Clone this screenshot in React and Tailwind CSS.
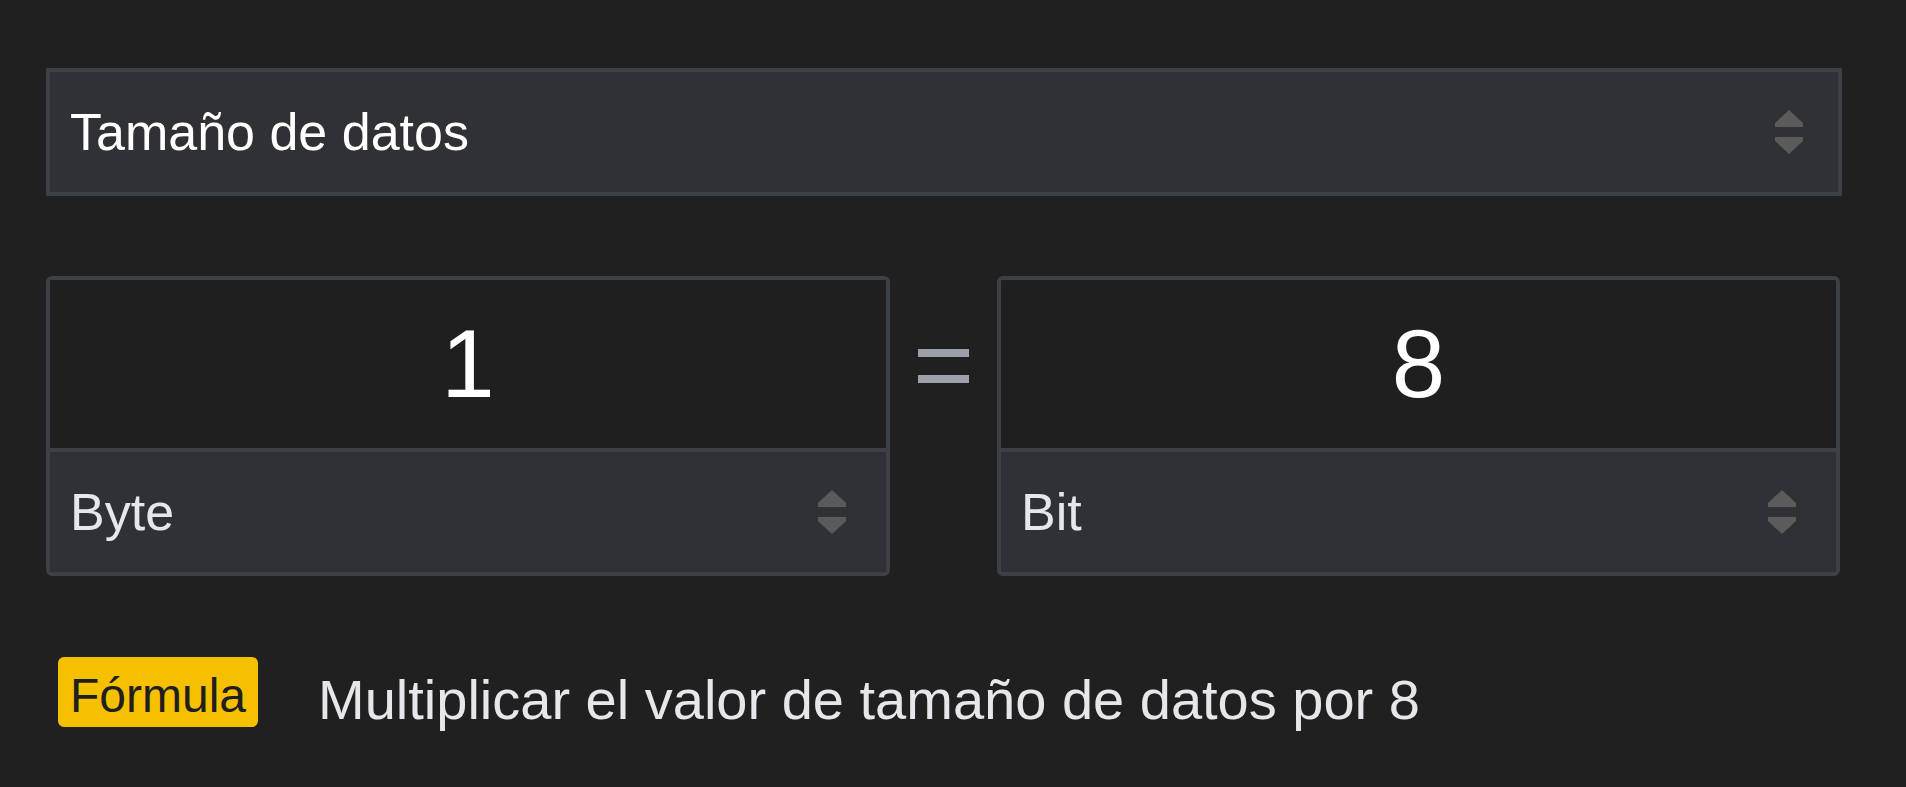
import React from "react";

function Arrows() {
  return (
    <svg width="28" height="44" viewBox="0 0 28 44" className="shrink-0">
      <polygon points="14,0 28,13 28,17 0,17 0,13" fill="#5b5b5b" />
      <polygon points="0,27 28,27 28,31 14,44 0,31" fill="#5b5b5b" />
    </svg>
  );
}

function Box({ value, unit }) {
  return (
    <div className="flex flex-col rounded-[6px] border-4 border-[#3d4045] overflow-hidden">
      <div className="h-[168px] bg-[#1f1f1f] flex items-center justify-center text-[96px] leading-none text-white">
        {value}
      </div>
      <div className="h-[124px] border-t-4 border-[#3d4045] bg-[#303135] flex items-center justify-between pl-[20px] pr-[40px]">
        <span className="text-[52px] leading-none text-[#e6e7ea]">{unit}</span>
        <Arrows />
      </div>
    </div>
  );
}

export default function App() {
  return (
    <div
      className="min-h-[787px] w-full bg-[#202020] pl-[46px] pr-[64px] pt-[68px]"
      style={{ fontFamily: '"Liberation Sans", Arial, sans-serif' }}
    >
      <div className="h-[128px] border-4 border-[#3d4045] bg-[#303135] flex items-center justify-between pl-[20px] pr-[35px]">
        <span className="text-[52px] leading-none text-white">Tamaño de datos</span>
        <Arrows />
      </div>

      <div className="mt-[80px] grid grid-cols-[844px_107px_1fr] pr-[2px]">
        <Box value="1" unit="Byte" />
        <div className="flex items-start justify-center pt-[73px]">
          <div className="flex flex-col gap-[18px]">
            <div className="w-[51px] h-[8px] bg-[#9ca0a8]" />
            <div className="w-[51px] h-[8px] bg-[#9ca0a8]" />
          </div>
        </div>
        <Box value="8" unit="Bit" />
      </div>

      <div className="mt-[80px] flex items-center pl-[12px]">
        <div className="h-[70px] w-[200px] shrink-0 rounded-[6px] bg-[#f4c000] flex items-center pl-[12px] pt-[8px]">
          <span className="text-[48px] leading-none text-[#1f1f1f]">Fórmula</span>
        </div>
        <span className="ml-[60px] pt-[16px] text-[56px] leading-none text-[#e6e7ea]">
          Multiplicar el valor de tamaño de datos por 8
        </span>
      </div>
    </div>
  );
}
